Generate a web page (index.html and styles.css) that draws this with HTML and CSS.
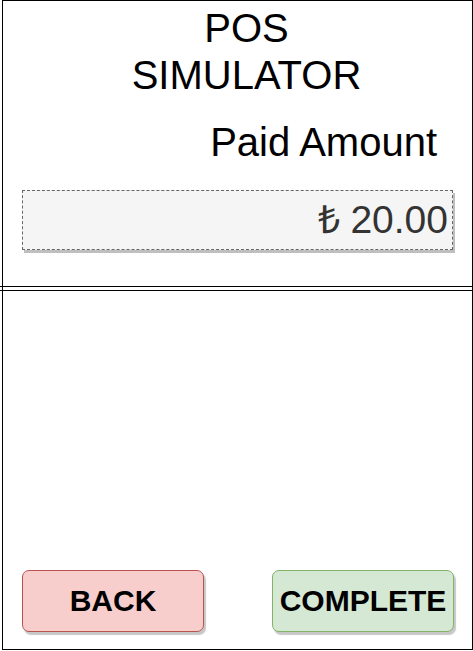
FILE: index.html
```html
<!DOCTYPE html>
<html>
<head>
<meta charset="utf-8">
<link rel="stylesheet" href="styles.css">
</head>
<body>
<div class="device">
  <div class="top">
    <div class="title">POS<br>SIMULATOR</div>
    <div class="label">Paid Amount</div>
    <div class="amount">₺ 20.00</div>
  </div>
  <div class="divider"></div>
  <div class="bottom">
    <div class="actions">
      <div class="btn btn-back">BACK</div>
      <div class="btn btn-complete">COMPLETE</div>
    </div>
  </div>
</div>
</body>
</html>
```
FILE: styles.css
```css
html, body {
  margin: 0;
  padding: 0;
  background: #ffffff;
}
body {
  font-family: "Liberation Sans", Arial, Helvetica, sans-serif;
  color: #000;
}
.device {
  box-sizing: border-box;
  margin-left: 2px;
  width: 471px;
  height: 650px;
  border: 1px solid #000;
  display: flex;
  flex-direction: column;
}
.top {
  height: 285px;
  display: flex;
  flex-direction: column;
}
.title {
  margin-top: 4px;
  padding-left: 18px;
  text-align: center;
  font-size: 40px;
  line-height: 47px;
}
.label {
  margin-top: 20px;
  text-align: right;
  padding-right: 35px;
  font-size: 40px;
  line-height: 47px;
}
.amount {
  box-sizing: border-box;
  margin-top: 24px;
  margin-left: 19px;
  width: 431px;
  height: 60px;
  border: 1px dashed #666;
  background: #f5f5f5;
  box-shadow: 2px 3px 0 rgba(0, 0, 0, 0.25);
  text-align: right;
  padding-right: 4px;
  padding-top: 3px;
  font-size: 39px;
  line-height: 52px;
  color: #333;
}
.divider {
  height: 3px;
  border-top: 1px solid #000;
  border-bottom: 1px solid #000;
  margin: 0 -1px 0 -3px;
}
.bottom {
  flex: 1;
  display: flex;
  flex-direction: column;
  justify-content: flex-end;
  padding: 0 18px 17px 19px;
}
.actions {
  display: flex;
  justify-content: space-between;
}
.btn {
  box-sizing: border-box;
  width: 182px;
  height: 62px;
  border-radius: 7px;
  display: flex;
  align-items: center;
  justify-content: center;
  font-weight: bold;
  font-size: 30px;
  box-shadow: 2px 3px 1px rgba(0, 0, 0, 0.22);
}
.btn-back {
  background: #f8cecc;
  border: 1px solid #b85450;
}
.btn-complete {
  background: #d5e8d4;
  border: 1px solid #82b366;
}
```
